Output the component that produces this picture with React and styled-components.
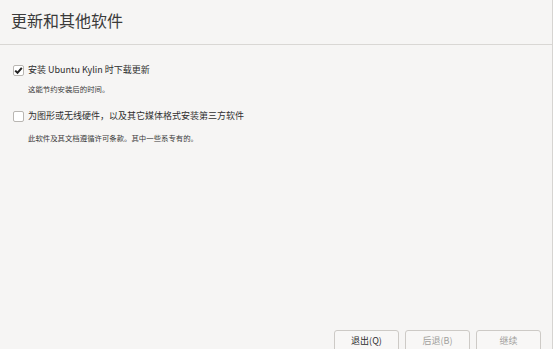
import React from "react";
import styled, { createGlobalStyle } from "styled-components";

const Global = createGlobalStyle`
  html, body { margin: 0; padding: 0; background: #f6f5f4; }
  body { font-family: "Noto Sans CJK SC", "Noto Sans", sans-serif; }
`;

const Window = styled.div`
  width: 553px;
  height: 349px;
  box-sizing: border-box;
  border-right: 1px solid #d6d4d1;
  background: #f6f5f4;
  display: flex;
  flex-direction: column;
  overflow: hidden;
`;

const Header = styled.div`
  height: 45px;
  flex: none;
  box-sizing: border-box;
  border-bottom: 1px solid #d9d7d4;
  display: flex;
  align-items: center;
  padding: 0 0 4px 11px;
`;

const Title = styled.h1`
  margin: 0;
  font-size: 16px;
  font-weight: 400;
  color: #3a3a3a;
`;

const Content = styled.div`
  flex: 1;
  padding: 19px 0 0 13px;
  display: flex;
  flex-direction: column;
`;

const Option = styled.div`
  display: flex;
  flex-direction: column;
  margin-bottom: ${(p) => p.$gap}px;
`;

const Row = styled.label`
  display: flex;
  align-items: center;
  gap: 4px;
  height: 12px;
`;

const Box = styled.span`
  width: 11px;
  height: 11px;
  box-sizing: border-box;
  border: 1px solid #b9b6b2;
  border-radius: 2px;
  background: #ffffff;
  display: flex;
  align-items: center;
  justify-content: center;
`;

const Label = styled.span`
  font-size: 9px;
  color: #2e2e2e;
  line-height: 12px;
`;

const Desc = styled.div`
  font-size: 7.4px;
  color: #3a3a3a;
  line-height: 10px;
  margin: ${(p) => p.$top}px 0 0 15px;
`;

const Footer = styled.div`
  height: 19px;
  flex: none;
  display: flex;
  justify-content: flex-end;
  gap: 6px;
  padding-right: 11px;
`;

const Button = styled.button`
  width: 65px;
  height: 24px;
  flex: none;
  box-sizing: border-box;
  border: 1px solid #cdcac6;
  border-radius: 3px;
  background: #f8f7f6;
  font-family: "Noto Sans CJK SC", "Noto Sans", sans-serif;
  font-size: 9px;
  color: ${(p) => (p.disabled ? "#a19f9c" : "#2e2e2e")};
  padding: 0 0 2px 0;
  line-height: 12px;
`;

function Check({ checked }) {
  return (
    <Box>
      {checked && (
        <svg width="9" height="9" viewBox="0 0 9 9">
          <path d="M1.2 4.6 L3.5 6.8 L7.8 1.8" fill="none" stroke="#222" strokeWidth="2" />
        </svg>
      )}
    </Box>
  );
}

export default function App() {
  return (
    <>
      <Global />
      <Window>
        <Header>
          <Title>更新和其他软件</Title>
        </Header>
        <Content>
          <Option $gap={16}>
            <Row>
              <Check checked />
              <Label>安装 Ubuntu Kylin 时下载更新</Label>
            </Row>
            <Desc $top={8}>这能节约安装后的时间。</Desc>
          </Option>
          <Option $gap={0}>
            <Row>
              <Check />
              <Label>为图形或无线硬件，以及其它媒体格式安装第三方软件</Label>
            </Row>
            <Desc $top={11}>此软件及其文档遵循许可条款。其中一些系专有的。</Desc>
          </Option>
        </Content>
        <Footer>
          <Button>退出(Q)</Button>
          <Button disabled>后退(B)</Button>
          <Button disabled>继续</Button>
        </Footer>
      </Window>
    </>
  );
}
